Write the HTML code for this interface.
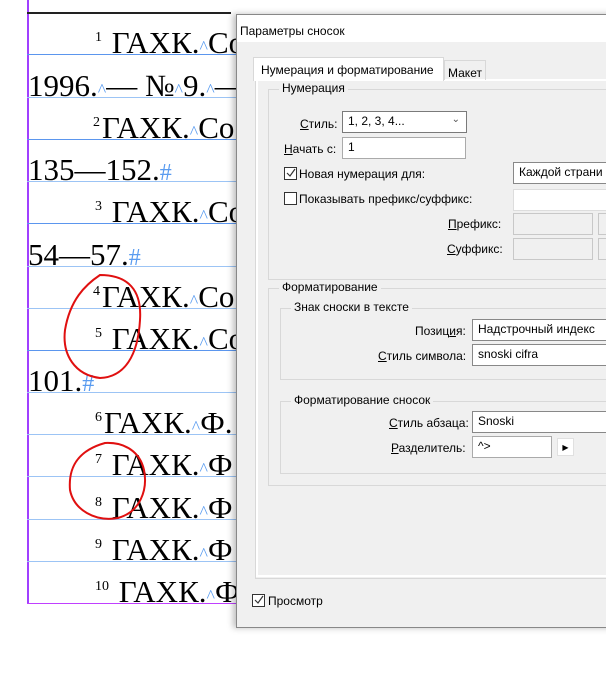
<!DOCTYPE html>
<html><head><meta charset="utf-8"><style>
*{margin:0;padding:0;box-sizing:border-box}
body{width:606px;height:674px;background:#fff;position:relative;overflow:hidden;font-family:"Liberation Sans",sans-serif}
.a{position:absolute}
.ln{position:absolute;left:27px;width:210px;height:1px;background:#9cc4f5}
.ln.d{background:#5b96ee}
.t{position:absolute;font-family:"Liberation Serif",serif;font-size:31px;line-height:31px;height:31px;color:#000;white-space:nowrap}
.s{font-size:14px;position:relative;top:-12px;margin-right:2px}
.b{color:#5a9cf0;font-size:18px}
.h{color:#5a9cf0;font-size:24px}
.lab{position:absolute;font-size:12px;white-space:nowrap}
.box{position:absolute;background:#fff;border:1px solid #7a7a7a;font-size:12px;padding:2px 5px;white-space:nowrap;overflow:hidden}
.dis{background:#f0f0f0;border-color:#c8c8c8}
.grp{position:absolute;border:1px solid #d8d8d8}
.gt{position:absolute;background:#f0f0f0;padding:0 3px;font-size:12px;top:-9px;left:10px}
.cb{position:absolute;width:13px;height:13px;border:1px solid #333;background:#fff}
</style></head><body>
<div class="a" style="left:27px;top:0;width:2px;height:604px;background:#a040ff"></div>
<div class="a" style="left:27px;top:603px;width:210px;height:1px;background:#c040ff"></div>
<div class="a" style="left:27px;top:12px;width:204px;height:2px;background:#222"></div>
<div class="ln d" style="top:54px"></div>
<div class="ln" style="top:97px"></div>
<div class="ln d" style="top:139px"></div>
<div class="ln" style="top:181px"></div>
<div class="ln d" style="top:223px"></div>
<div class="ln" style="top:266px"></div>
<div class="ln" style="top:308px"></div>
<div class="ln d" style="top:350px"></div>
<div class="ln" style="top:392px"></div>
<div class="ln" style="top:434px"></div>
<div class="ln" style="top:476px"></div>
<div class="ln" style="top:519px"></div>
<div class="ln" style="top:561px"></div>

<div class="t" style="left:95px;top:27px"><span class="s">1</span> ГАХК.<span class="b">^</span>Со</div>
<div class="t" style="left:28px;top:70px">1996.<span class="b">^</span>— №<span class="b">^</span>9.<span class="b">^</span>—</div>
<div class="t" style="left:93px;top:112px"><span class="s">2</span>ГАХК.<span class="b">^</span>Со</div>
<div class="t" style="left:28px;top:154px">135—152.<span class="h">#</span></div>
<div class="t" style="left:95px;top:196px"><span class="s">3</span> ГАХК.<span class="b">^</span>Со</div>
<div class="t" style="left:28px;top:239px">54—57.<span class="h">#</span></div>
<div class="t" style="left:93px;top:281px"><span class="s">4</span>ГАХК.<span class="b">^</span>Со</div>
<div class="t" style="left:95px;top:323px"><span class="s">5</span> ГАХК.<span class="b">^</span>Со</div>
<div class="t" style="left:28px;top:365px">101.<span class="h">#</span></div>
<div class="t" style="left:95px;top:407px"><span class="s">6</span>ГАХК.<span class="b">^</span>Ф.</div>
<div class="t" style="left:95px;top:449px"><span class="s">7</span> ГАХК.<span class="b">^</span>Ф</div>
<div class="t" style="left:95px;top:492px"><span class="s">8</span> ГАХК.<span class="b">^</span>Ф</div>
<div class="t" style="left:95px;top:534px"><span class="s">9</span> ГАХК.<span class="b">^</span>Ф</div>
<div class="t" style="left:95px;top:576px"><span class="s">10</span> ГАХК.<span class="b">^</span>Ф</div>

<svg class="a" style="left:0;top:0" width="240" height="620">
<path d="M100,275 C85,285 70,300 65,330 C62,355 75,375 100,378 C125,377 138,355 140,320 C142,290 128,275 100,275 Z" fill="none" stroke="#e01010" stroke-width="2"/>
<path d="M105,443 C80,450 68,465 70,490 C74,510 95,522 118,518 C140,512 148,490 144,470 C140,452 125,442 105,443 Z" fill="none" stroke="#e01010" stroke-width="2"/>
</svg>

<div class="a" style="left:236px;top:14px;width:380px;height:614px;background:#f0f0f0;border:1px solid #888;box-shadow:-3px 0 6px rgba(0,0,0,.25);font-size:12px">
<div class="a" style="left:0;top:0;width:380px;height:27px;background:#fff"></div>
<div class="lab" style="left:3px;top:9px">Параметры сносок</div>
<div class="a" style="left:18px;top:64px;width:370px;height:500px;background:#f0f0f0;border:1px solid #d8d8d8;border-right:0"></div>
<div class="a" style="left:19px;top:64px;width:370px;height:498px;border:2px solid #fff;border-right:0"></div>
<div class="a" style="left:16px;top:42px;width:191px;height:24px;background:#fff;border:1px solid #d8d8d8;border-bottom:0"></div>
<div class="lab" style="left:24px;top:48px">Нумерация и форматирование</div>
<div class="a" style="left:207px;top:45px;width:42px;height:20px;border:1px solid #d8d8d8;border-bottom:0"></div>
<div class="lab" style="left:211px;top:51px">Макет</div>

<div class="grp" style="left:31px;top:74px;width:360px;height:191px"><div class="gt">Нумерация</div></div>
<div class="lab" style="left:63px;top:102px"><u>С</u>тиль:</div>
<div class="box" style="left:105px;top:96px;width:125px;height:22px">1, 2, 3, 4...<span style="position:absolute;right:6px;top:2px;color:#555;font-size:10px">&#8964;</span></div>
<div class="lab" style="left:47px;top:127px"><u>Н</u>ачать с:</div>
<div class="box" style="left:105px;top:122px;width:124px;height:22px;border-color:#aaa">1</div>
<div class="cb" style="left:47px;top:152px"><svg width="11" height="11" style="position:absolute;left:0;top:0"><path d="M2,5 L5,8 L10,1" fill="none" stroke="#333" stroke-width="1.2"/></svg></div>
<div class="lab" style="left:62px;top:152px">Новая нумерация для:</div>
<div class="box" style="left:276px;top:147px;width:110px;height:22px;border-color:#888">Каждой страни</div>
<div class="cb" style="left:47px;top:177px"></div>
<div class="lab" style="left:62px;top:177px">Показывать префикс/суффикс:</div>
<div class="box" style="left:276px;top:174px;width:110px;height:22px;border-color:#ddd"></div>
<div class="lab" style="left:211px;top:202px"><u>П</u>рефикс:</div>
<div class="box dis" style="left:276px;top:198px;width:80px;height:22px"></div>
<div class="box dis" style="left:361px;top:198px;width:20px;height:22px"></div>
<div class="lab" style="left:210px;top:227px"><u>С</u>уффикс:</div>
<div class="box dis" style="left:276px;top:223px;width:80px;height:22px"></div>
<div class="box dis" style="left:361px;top:223px;width:20px;height:22px"></div>

<div class="grp" style="left:31px;top:273px;width:360px;height:198px"><div class="gt">Форматирование</div></div>
<div class="grp" style="left:43px;top:293px;width:350px;height:72px"><div class="gt">Знак сноски в тексте</div></div>
<div class="lab" style="left:178px;top:309px">Позиц<u>и</u>я:</div>
<div class="box" style="left:235px;top:304px;width:150px;height:22px;border-color:#888">Надстрочный индекс</div>
<div class="lab" style="left:141px;top:334px"><u>С</u>тиль символа:</div>
<div class="box" style="left:235px;top:329px;width:150px;height:22px;border-color:#888">snoski cifra</div>
<div class="grp" style="left:43px;top:386px;width:350px;height:73px"><div class="gt">Форматирование сносок</div></div>
<div class="lab" style="left:152px;top:401px"><u>С</u>тиль абзаца:</div>
<div class="box" style="left:235px;top:396px;width:150px;height:22px;border-color:#888">Snoski</div>
<div class="lab" style="left:154px;top:426px"><u>Р</u>азделитель:</div>
<div class="box" style="left:235px;top:421px;width:80px;height:22px;border-color:#aaa">^&gt;</div>
<div class="a" style="left:320px;top:423px;width:17px;height:18px;background:#fff;border:1px solid #e0e0e0;font-size:8px;text-align:center;line-height:17px">&#9654;</div>

<div class="cb" style="left:15px;top:579px"><svg width="11" height="11" style="position:absolute;left:0;top:0"><path d="M2,5 L5,8 L10,1" fill="none" stroke="#333" stroke-width="1.2"/></svg></div>
<div class="lab" style="left:31px;top:579px">Просмотр</div>
</div>
</body></html>
